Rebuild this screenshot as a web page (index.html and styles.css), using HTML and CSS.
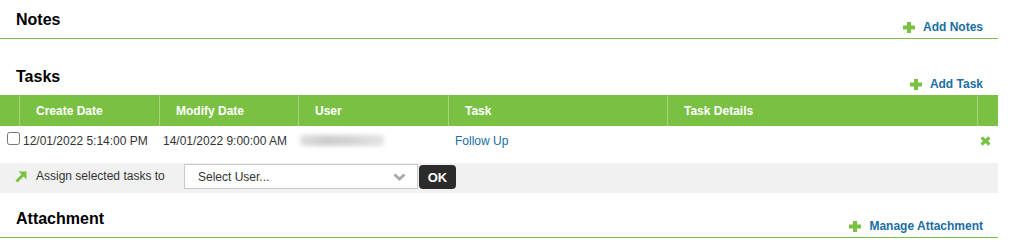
FILE: index.html
```html
<!DOCTYPE html>
<html lang="en">
<head>
<meta charset="utf-8">
<title>Notes and Tasks</title>
<link rel="stylesheet" href="styles.css">
</head>
<body>
<div class="page">
  <div class="sec-head with-line">
    <h2 class="sec-title">Notes</h2>
    <a class="sec-link" href="#"><svg class="plus" width="12" height="11" viewBox="0 0 12 11"><rect x="4" y="0" width="4" height="11" fill="#7ac143"/><rect x="0" y="3.5" width="12" height="4" fill="#7ac143"/></svg><span>Add Notes</span></a>
  </div>

  <div class="sec-head tasks-head">
    <h2 class="sec-title">Tasks</h2>
    <a class="sec-link" href="#"><svg class="plus" width="12" height="11" viewBox="0 0 12 11"><rect x="4" y="0" width="4" height="11" fill="#7ac143"/><rect x="0" y="3.5" width="12" height="4" fill="#7ac143"/></svg><span>Add Task</span></a>
  </div>

  <div class="grid-head">
    <div class="hc c0"></div>
    <div class="hc c1">Create Date</div>
    <div class="hc c2">Modify Date</div>
    <div class="hc c3">User</div>
    <div class="hc c4">Task</div>
    <div class="hc c5">Task Details</div>
    <div class="hc c6 last"></div>
  </div>

  <div class="grid-row">
    <div class="dc d1"><input type="checkbox" class="chk"><span>12/01/2022 5:14:00 PM</span></div>
    <div class="dc d2">14/01/2022 9:00:00 AM</div>
    <div class="dc d3"><span class="blurred"></span></div>
    <div class="dc d4"><a class="task-link" href="#">Follow Up</a></div>
    <div class="dc d5"></div>
    <div class="dc d6"><svg width="11" height="10" viewBox="0 0 11 10"><path d="M1.5 1.5 L9.5 8.5 M9.5 1.5 L1.5 8.5" stroke="#7ac143" stroke-width="3" stroke-linecap="butt"/></svg></div>
  </div>

  <div class="assign-row">
    <svg class="arrow" width="12" height="12" viewBox="0 0 12 12"><path d="M1.5 10.5 L8.5 3.5" stroke="#7ac143" stroke-width="3"/><polygon points="3.5,0.5 11.5,0.5 11.5,8.5" fill="#7ac143"/></svg>
    <span class="assign-label">Assign selected tasks to</span>
    <div class="select"><span>Select User...</span><svg class="chev" width="13" height="8" viewBox="0 0 13 8"><path d="M1.5 1.5 L6.5 6 L11.5 1.5" fill="none" stroke="#aaaaaa" stroke-width="3"/></svg></div>
    <button class="ok-btn" type="button">OK</button>
  </div>

  <div class="sec-head with-line attach-head">
    <h2 class="sec-title">Attachment</h2>
    <a class="sec-link" href="#"><svg class="plus" width="12" height="11" viewBox="0 0 12 11"><rect x="4" y="0" width="4" height="11" fill="#7ac143"/><rect x="0" y="3.5" width="12" height="4" fill="#7ac143"/></svg><span>Manage Attachment</span></a>
  </div>
</div>
</body>
</html>
```

FILE: styles.css
```css
* { box-sizing: border-box; }

body {
  margin: 0;
  background: #ffffff;
  font-family: "Liberation Sans", Arial, sans-serif;
  font-size: 12px;
  color: #333333;
}

.page {
  width: 998px;
}

.sec-head {
  display: flex;
  justify-content: space-between;
  align-items: flex-start;
  height: 38px;
  padding: 0 15px 0 16px;
}

.with-line {
  height: 39px;
  border-bottom: 1px solid #7ac143;
}

.tasks-head {
  margin-top: 18px;
}

.attach-head {
  margin-top: 6px;
}

.sec-title {
  margin: 11px 0 0 0;
  font-size: 16px;
  line-height: 18px;
  font-weight: bold;
  color: #000000;
}

.sec-link {
  margin-top: 20px;
  display: inline-flex;
  align-items: center;
  gap: 8px;
  font-size: 12px;
  line-height: 14px;
  font-weight: bold;
  color: #1a6ea3;
  text-decoration: none;
}

.plus {
  display: block;
}

.grid-head {
  display: flex;
  height: 31px;
  background: #7ac143;
  color: #ffffff;
  font-weight: bold;
  font-size: 12px;
}

.hc {
  display: flex;
  align-items: center;
  padding-left: 16px;
  border-right: 1px solid #a3d47c;
}

.hc.last { border-right: 0; }

.c0 { width: 20px; padding-left: 0; }
.c1 { width: 140px; }
.c2 { width: 139px; }
.c3 { width: 150px; }
.c4 { width: 219px; }
.c5 { width: 310px; }
.c6 { width: 20px; padding-left: 0; }

.grid-row {
  display: flex;
  height: 37px;
  background: #ffffff;
  font-size: 12px;
  line-height: 15px;
  color: #333333;
}

.dc {
  padding-top: 8px;
}

.d1 {
  width: 160px;
  display: flex;
  align-items: flex-start;
  white-space: nowrap;
}

.chk {
  width: 13px;
  height: 13px;
  margin: -2px 3px 0 7px;
}

.d2 { width: 139px; padding-left: 3px; white-space: nowrap; }
.d3 { width: 150px; padding-left: 1px; padding-top: 9px; }
.d4 { width: 219px; padding-left: 6px; }
.d5 { width: 310px; }
.d6 { width: 20px; padding-top: 10px; padding-left: 2px; }
.d6 svg { display: block; }

.blurred {
  display: block;
  width: 84px;
  height: 11px;
  background: linear-gradient(90deg, #e0e0e0 0%, #cdcdcd 30%, #d4d4d4 60%, #e4e4e4 100%);
  filter: blur(2px);
  border-radius: 4px;
}

.task-link {
  color: #1a6ea3;
  text-decoration: none;
}

.assign-row {
  display: flex;
  align-items: flex-start;
  height: 30px;
  padding-top: 1px;
  background: #f1f1f1;
}

.arrow {
  display: block;
  margin: 7px 0 0 15px;
  flex: none;
}

.assign-label {
  width: 148px;
  margin: 5px 0 0 9px;
  line-height: 14px;
  color: #333333;
  white-space: nowrap;
}

.select {
  width: 234px;
  height: 25px;
  background: #ffffff;
  border: 1px solid #c9c9c9;
  display: flex;
  align-items: center;
  justify-content: space-between;
  padding: 0 11px 0 13px;
  color: #333333;
  font-size: 12px;
}

.chev { display: block; }

.ok-btn {
  width: 37px;
  height: 24px;
  margin: 1px 0 0 1px;
  padding: 0;
  border: 0;
  border-radius: 4px;
  background: #2b2b2b;
  color: #ffffff;
  font-family: "Liberation Sans", Arial, sans-serif;
  font-size: 13px;
  font-weight: bold;
}
```
